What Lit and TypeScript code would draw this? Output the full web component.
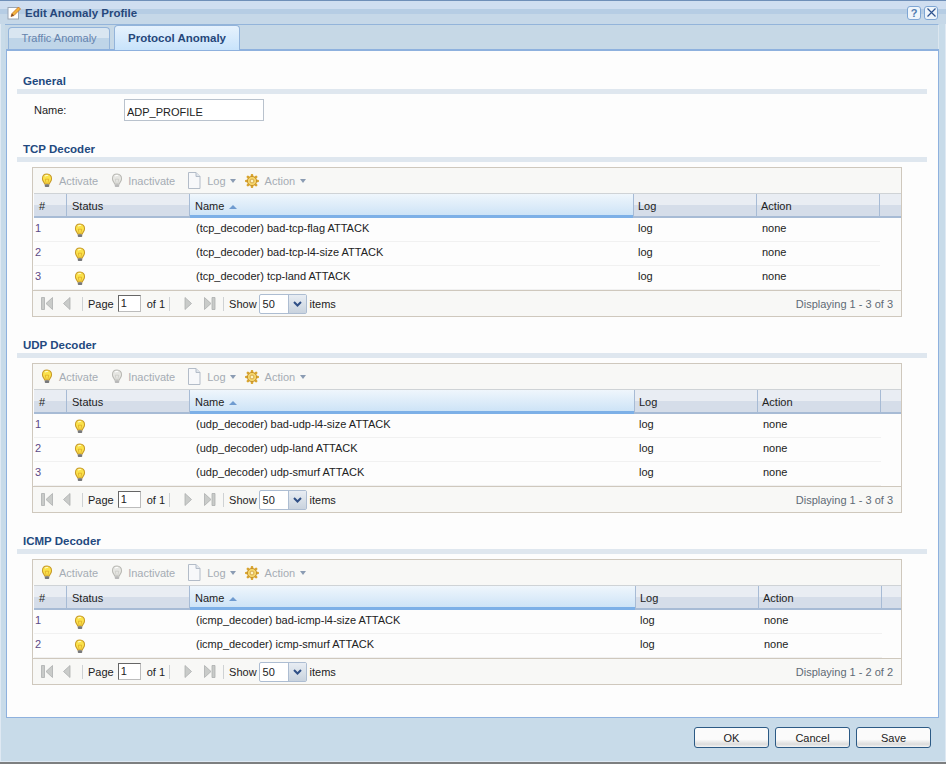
import { LitElement, html, css, svg } from "lit";
import { customElement } from "lit/decorators.js";

const bulb = (on: boolean) => html`<svg class="bulb" width="12" height="15" viewBox="0 0 14 17">
  <path d="M7 1C3.600 1 1.700 3.400 1.700 6.400c0 2.200 1.200 3.300 2 4.800.3.600.4 1 .5 1.500h5.600c.1-.5.2-.9.5-1.500.8-1.500 2-2.600 2-4.800C12.300 3.400 10.400 1 7 1z"
    fill="${on ? "#fbe24a" : "#e6e6e2"}" stroke="${on ? "#c79a2a" : "#b9b9b4"}" stroke-width="1.200"/>
  <path d="M4.500 3.500C5.500 2.600 7 2.400 8.200 2.800" fill="none" stroke="${on ? "#fffbd0" : "#fff"}" stroke-width="1.200"/>
  <path d="M5 7l1 5M9 7l-1 5M5 7h4" fill="none" stroke="${on ? "#d99c1e" : "#c4c4c0"}" stroke-width=".7"/>
  <rect x="4.400" y="12.800" width="5.200" height="3.200" rx="1" fill="${on ? "#77787a" : "#b9b9b9"}"/>
</svg>`;

const docIcon = html`<svg width="14" height="17" viewBox="0 0 14 17">
  <path d="M1.500 .5h7.500l4 4v12h-11.500z" fill="#f7f8fa" stroke="#b3bcc8"/>
  <path d="M9 .5v4h4" fill="#dfe5ec" stroke="#b3bcc8"/>
</svg>`;

const gearIcon = html`<svg width="14" height="14" viewBox="0 0 14 14">
  <g stroke="#d9a52f" stroke-width="2.600" stroke-linecap="round">
    <path d="M7 1.200v11.600M1.200 7h11.600M2.900 2.900l8.200 8.200M11.100 2.900l-8.200 8.200"/>
  </g>
  <circle cx="7" cy="7" r="4.600" fill="#f5d66c" stroke="#c8922a"/>
  <circle cx="7" cy="7" r="1.900" fill="#fdf3c4" stroke="#c8922a" stroke-width=".7"/>
</svg>`;

const caret = html`<svg class="caret" width="6" height="4" viewBox="0 0 6 4"><path d="M0 0h6L3 4z" fill="#8b9cb3"/></svg>`;

const pagerIcon = (d: string, w: number) => html`<svg width="${w}" height="15" viewBox="0 0 ${w} 15">
  ${svg`<path d="${d}" fill="#c9cbc9" stroke="#acafae" stroke-width=".8"/>`}
</svg>`;

const icons = {
  first: pagerIcon("M.5 1.500h3v12h-3zM11.500 1.500v12L5 7.500z", 12),
  prev: pagerIcon("M7 1.500v12L.5 7.500z", 8),
  next: pagerIcon("M1 1.500v12L7.500 7.500z", 8),
  last: pagerIcon("M.5 1.500v12L7 7.500zM8 1.500h3v12H8z", 12),
};

interface Grid { title: string; rows: string[]; nameW: number; }

const grids: Grid[] = [
  { title: "TCP Decoder", nameW: 444, rows: ["(tcp_decoder) bad-tcp-flag ATTACK", "(tcp_decoder) bad-tcp-l4-size ATTACK", "(tcp_decoder) tcp-land ATTACK"] },
  { title: "UDP Decoder", nameW: 445, rows: ["(udp_decoder) bad-udp-l4-size ATTACK", "(udp_decoder) udp-land ATTACK", "(udp_decoder) udp-smurf ATTACK"] },
  { title: "ICMP Decoder", nameW: 446, rows: ["(icmp_decoder) bad-icmp-l4-size ATTACK", "(icmp_decoder) icmp-smurf ATTACK"] },
];

@customElement("app-root")
export class AppRoot extends LitElement {
  static styles = css`
    :host { display: block; width: 946px; height: 764px; overflow: hidden; font: 11px "Liberation Sans", Arial, sans-serif; color: #222; }
    .win { height: 764px; box-sizing: border-box; display: flex; flex-direction: column; border-top: 1px solid #6f8fb8; border-bottom: 2px solid #7d7f80; background: #c8dbe9; box-shadow: inset 0 0 0 1px #dfe9f3; }
    .title { height: 23px; flex: none; display: flex; align-items: center; gap: 3px; padding: 0 8px 0 7px; background: linear-gradient(#cfdef0 0 8px, #b6cde4 8px 13px, #c6d8e8 13px); }
    .title b { font-size: 11.500px; color: #26477a; flex: 1; }
    .tb { width: 14px; height: 14px; box-sizing: border-box; border: 1px solid #7ea6d4; border-radius: 3px; background: #eef5fb; display: flex; align-items: center; justify-content: center; font: bold 11px "Liberation Sans", sans-serif; color: #4f7cb0; }
    .strip { height: 25px; flex: none; box-sizing: border-box; margin: 0 7px 0 5px; border-top: 1px solid #93b4da; border-right: 1px solid #dbe6ef; display: flex; align-items: flex-end; gap: 4px; padding-left: 3px; background: #c6d8e6; }
    .tab { box-sizing: border-box; height: 22px; width: 102px; padding-bottom: 2px; border: 1px solid #93b4da; border-bottom: 0; border-radius: 4px 4px 0 0; display: flex; align-items: center; justify-content: center; color: #6583ad; background: linear-gradient(#d9e6f1 0 50%, #bfd5e8 50%); }
    .tab.on { height: 25px; width: 126px; padding-bottom: 0; font-weight: bold; font-size: 11.500px; color: #26477a; background: linear-gradient(#e6f2fd, #c8e3fb); margin-bottom: -1px; position: relative; z-index: 1; }
    .panel { flex: 1; min-height: 0; margin: 0 7px 0 6px; box-sizing: border-box; border: 1px solid #8eb1de; border-top-width: 2px; background: #fdfdfd; padding: 22px 11px 0 10px; }
    .sec { font-weight: bold; font-size: 11.500px; color: #23497f; padding-left: 6px; height: 16px; line-height: 16px; }
    .bar { height: 5px; background: #dfe7ef; }
    .name { display: flex; align-items: center; height: 22px; margin: 5px 0 20px; padding-left: 17px; color: #222; }
    .name label { width: 90px; }
    .name input { width: 140px; height: 22px; box-sizing: border-box; border: 1px solid #b9c2cd; padding: 3px 2px 0; font: 11px "Liberation Sans", sans-serif; color: #222; background: #fff; outline: none; }
    .grid { margin: 5px 25px 20px 15px; border: 1px solid #cfc8bd; box-sizing: border-box; background: #fdfdfd; }
    .tool { height: 25px; display: flex; align-items: center; padding-left: 7px; color: #a5acb4; background: #f8f8f6; }
    .tool span { white-space: nowrap; }
    .bulb { flex: none; display: block; margin: 0 1px; }
    .head, .row { display: grid; }
    .head { height: 25px; box-sizing: border-box; border-top: 1px solid #cfd3d6; border-bottom: 2px solid #a7bbd5; background: linear-gradient(#e9edf3 0 50%, #d5dde9 50%); margin-left: 1px; }
    .head > div { border-right: 1px solid #a7bbd5; padding: 6px 0 0 5px; color: #222; white-space: nowrap; display: flex; align-items: flex-start; gap: 5px; }
    .head > div:last-child { border-right: 0; }
    .head > .sorted { background: linear-gradient(#eff6fc, #c9e1f6); box-shadow: inset 0 -3px 0 #7db0e7; margin-bottom: -2px; }
    .head .sorted svg { margin-top: 5px; }
    .head > .tight { padding-left: 4px; }
    .row { height: 24px; margin-left: 1px; }
    .row > div { border-bottom: 1px solid #f1f1f1; padding-left: 5px; line-height: 20px; white-space: nowrap; }
    .row > div:last-child { border-bottom: 0; }
    .row > .num { color: #5c4a86; padding-left: 1px; }
    .row > .st { padding: 5px 0 0 6px; }
    .row > .nm { padding-left: 6px; }
    .row > .lg { padding-left: 4px; }
    .pager { height: 26px; box-sizing: border-box; border-top: 1px solid #cfc8bd; display: flex; align-items: center; padding: 0 8px; background: #f8f8f6; white-space: nowrap; }
    .pager svg { flex: none; display: block; }
    .sep { width: 1px; height: 14px; background: #cfd2d4; flex: none; }
    .pg { width: 23px; height: 17px; box-sizing: border-box; border: 1px solid #bcbcbc; border-top-color: #666; border-left-color: #666; background: #fff; line-height: 15px; padding-left: 2px; }
    .combo { width: 48px; height: 20px; box-sizing: border-box; border: 1px solid #adbdd2; display: flex; background: #fff; border-radius: 2px; }
    .combo span { flex: 1; padding: 3px 0 0 3px; }
    .combo i { width: 17px; background: linear-gradient(#e8edf3, #c9d3de); border-left: 1px solid #adbdd2; display: flex; align-items: center; justify-content: center; }
    .disp { margin-left: auto; color: #5f6a75; }
    .foot { flex: none; height: 44px; box-sizing: border-box; display: flex; justify-content: flex-end; align-items: flex-start; gap: 6px; padding: 9px 15px 0 0; }
    .btn { width: 75px; height: 21px; box-sizing: border-box; border: 1px solid #2c5a85; border-radius: 3px; background: linear-gradient(#fbfbfb 0 60%, #dcdcdc 85%, #f4f4f4); font: 11px "Liberation Sans", sans-serif; color: #222; padding: 1px 0 0; }
  `;

  cols(g: Grid) {
    return `33px 123px ${g.nameW}px 123px 123px 21px`;
  }

  grid(g: Grid) {
    const n = g.rows.length;
    return html`<div class="sec">${g.title}</div><div class="bar"></div>
      <div class="grid">
        <div class="tool">
          ${bulb(true)}<span style="margin-left:5px">Activate</span>
          <span style="width:12px"></span>${bulb(false)}<span style="margin-left:4px">Inactivate</span>
          <span style="width:12px"></span>${docIcon}<span style="margin-left:6px">Log</span>
          <span style="width:4px"></span>${caret}
          <span style="width:9px"></span>${gearIcon}<span style="margin-left:6px">Action</span>
          <span style="width:5px"></span>${caret}
        </div>
        <div class="head" style="grid-template-columns:${this.cols(g)}">
          <div>#</div><div>Status</div>
          <div class="sorted">Name <svg width="8" height="4" viewBox="0 0 8 4"><path d="M0 4h8L4 0z" fill="#6f9bd0"/></svg></div>
          <div class="tight">Log</div><div class="tight">Action</div><div></div>
        </div>
        ${g.rows.map((r, i) => html`<div class="row" style="grid-template-columns:${this.cols(g)}">
          <div class="num">${i + 1}</div><div class="st">${bulb(true)}</div><div class="nm">${r}</div><div class="lg">log</div><div>none</div><div></div>
        </div>`)}
        <div class="pager">
          ${icons.first}<span style="width:10px"></span>${icons.prev}<span style="width:11px"></span><span class="sep"></span>
          <span style="margin-left:5px">Page</span><span style="width:4px"></span><span class="pg">1</span>
          <span style="margin-left:6px">of 1</span><span style="width:4px"></span><span class="sep"></span>
          <span style="width:14px"></span>${icons.next}<span style="width:12px"></span>${icons.last}<span style="width:7px"></span><span class="sep"></span>
          <span style="margin-left:5px">Show</span><span style="width:2px"></span>
          <span class="combo"><span>50</span><i><svg width="9" height="6" viewBox="0 0 9 6"><path d="M1 1l3.500 3.500L8 1" fill="none" stroke="#2f4f86" stroke-width="2"/></svg></i></span>
          <span style="margin-left:3px">items</span>
          <span class="disp">Displaying 1 - ${n} of ${n}</span>
        </div>
      </div>`;
  }

  render() {
    return html`<div class="win">
      <div class="title">
        <svg width="15" height="15" viewBox="0 0 15 15">
          <rect x="1" y="2.500" width="10.500" height="11.500" fill="#fff" stroke="#9aa6b5"/>
          <path d="M4 11.500l1-3L11.500 2l2 2L7 10.500z" fill="#f3b43b" stroke="#c5702a" stroke-width=".8"/>
          <path d="M4 11.500l1-3 2 2z" fill="#7b4a2a"/>
        </svg>
        <b>Edit Anomaly Profile</b>
        <span class="tb">?</span>
        <span class="tb"><svg width="9" height="9" viewBox="0 0 9 9"><path d="M.5.500l8 8M8.500.500l-8 8" stroke="#2f548f" stroke-width="1.200"/></svg></span>
      </div>
      <div class="strip">
        <div class="tab">Traffic Anomaly</div>
        <div class="tab on">Protocol Anomaly</div>
      </div>
      <div class="panel">
        <div class="sec">General</div><div class="bar"></div>
        <div class="name"><label>Name:</label><input value="ADP_PROFILE" /></div>
        ${grids.map((g) => this.grid(g))}
      </div>
      <div class="foot">
        <button class="btn">OK</button><button class="btn">Cancel</button><button class="btn">Save</button>
      </div>
    </div>`;
  }
}
